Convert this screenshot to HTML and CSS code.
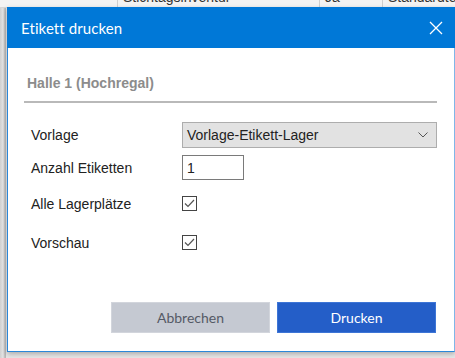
FILE: index.html
```html
<!DOCTYPE html>
<html lang="de">
<head>
<meta charset="utf-8">
<title>Etikett drucken</title>
<link rel="stylesheet" href="styles.css">
</head>
<body>
<div class="backdrop">
  <div class="grid-row">
    <div class="cell c0"></div>
    <div class="cell c1">Stichtagsinventur</div>
    <div class="cell c2">Ja</div>
    <div class="cell c3">Standardtext</div>
  </div>
  <div class="side-strip"></div>
</div>

<div class="dialog">
  <div class="titlebar">
    <span class="title">Etikett drucken</span>
    <svg class="close" width="14" height="14" viewBox="0 0 14 14"><path d="M1 1L13 13M13 1L1 13" stroke="#fff" stroke-width="1.3" fill="none"/></svg>
  </div>
  <div class="content">
    <div class="section-head">Halle 1 (Hochregal)</div>
    <div class="form">
      <div class="row r1">
        <span class="label">Vorlage</span>
        <div class="select">
          <span>Vorlage-Etikett-Lager</span>
          <svg width="10" height="6" viewBox="0 0 10 6"><path d="M0.5 0.5L5 5L9.5 0.5" stroke="#555" stroke-width="1" fill="none"/></svg>
        </div>
      </div>
      <div class="row r2">
        <span class="label">Anzahl Etiketten</span>
        <div class="input">1</div>
      </div>
      <div class="row r3">
        <span class="label">Alle Lagerplätze</span>
        <span class="check"><svg width="13" height="13" viewBox="0 0 13 13"><path d="M2 6.5L5 9.5L11 3" stroke="#555" stroke-width="1.2" fill="none"/></svg></span>
      </div>
      <div class="row r4">
        <span class="label">Vorschau</span>
        <span class="check"><svg width="13" height="13" viewBox="0 0 13 13"><path d="M2 6.5L5 9.5L11 3" stroke="#555" stroke-width="1.2" fill="none"/></svg></span>
      </div>
    </div>
  </div>
  <div class="footer">
    <button class="btn cancel">Abbrechen</button>
    <button class="btn primary">Drucken</button>
  </div>
</div>
</body>
</html>
```

FILE: styles.css
```css
html, body {
  margin: 0;
  padding: 0;
}
body {
  width: 455px;
  height: 358px;
  overflow: hidden;
  position: relative;
  background: #e6e6e6;
  font-family: "Liberation Sans", Arial, sans-serif;
}

.backdrop {
  position: absolute;
  inset: 0;
}
.grid-row {
  display: flex;
  height: 7px;
  overflow: hidden;
  background: #f3f3f3;
  border-bottom: 1px solid #d6d6d6;
}
.cell {
  font-size: 14px;
  line-height: 16px;
  margin-top: -11px;
  color: #333;
  padding-left: 5px;
  border-left: 1px solid #cfcfcf;
  white-space: nowrap;
  overflow: hidden;
}
.c0 { width: 112px; border-left: none; }
.c1 { width: 196px; }
.c2 { width: 57px; }
.c3 { flex: 1; }
.side-strip {
  position: absolute;
  left: 0;
  top: 8px;
  width: 6px;
  bottom: 0;
  background: linear-gradient(90deg, #cfcfcf 0, #e4e4e4 3px, #b8b8b8 5px);
}

.dialog {
  position: absolute;
  left: 7px;
  top: 7px;
  width: 448px;
  height: 345px;
  box-sizing: border-box;
  border: 1px solid #2a87d8;
  border-right-color: #7fb6e8;
  background: #fff;
  display: flex;
  flex-direction: column;
  box-shadow: 0 2px 5px rgba(0,0,0,0.25);
}
.titlebar {
  height: 41px;
  margin: -1px -1px 0 -1px;
  background: #0078d7;
  display: flex;
  align-items: center;
  justify-content: space-between;
  padding: 0 12px 0 14px;
  flex-shrink: 0;
}
.title {
  font-family: Lato, "Noto Sans", sans-serif;
  font-size: 15px;
  color: #fff;
  letter-spacing: 0.1px;
}
.close {
  display: block;
}

.content {
  flex: 1;
  padding: 0 17px 0 16px;
}
.section-head {
  margin-top: 27px;
  padding-left: 3px;
  font-weight: bold;
  font-size: 14px;
  line-height: 16px;
  color: #8c8c8c;
  padding-bottom: 10px;
  border-bottom: 2px solid #b9b9b9;
}
.form {
  padding-left: 7px;
  padding-top: 19px;
  display: flex;
  flex-direction: column;
}
.row {
  display: flex;
  align-items: center;
  font-size: 14px;
  color: #222;
}
.label {
  width: 151px;
  flex-shrink: 0;
}
.r1 { height: 26px; }
.r2 { height: 25px; margin-top: 7px; }
.r3 { height: 25px; margin-top: 11px; }
.r4 { height: 25px; margin-top: 14px; }

.select {
  flex: 1;
  height: 26px;
  box-sizing: border-box;
  border: 1px solid #adadad;
  background: #e2e2e2;
  display: flex;
  align-items: center;
  justify-content: space-between;
  padding: 0 8px 0 4px;
  margin-right: 0;
}
.input {
  width: 62px;
  height: 25px;
  box-sizing: border-box;
  border: 1px solid #7a7a7a;
  padding-left: 4px;
  display: flex;
  align-items: center;
  background: #fff;
}
.check {
  width: 15px;
  height: 15px;
  box-sizing: border-box;
  border: 1px solid #444;
  display: flex;
  align-items: center;
  justify-content: center;
  background: #fff;
}
.check svg { display: block; }

.footer {
  display: flex;
  justify-content: flex-end;
  gap: 7px;
  padding: 0 18px 18px 0;
}
.btn {
  width: 159px;
  height: 31px;
  border: 1px solid transparent;
  font-family: Lato, "Noto Sans", sans-serif;
  font-size: 14px;
  padding: 0;
  cursor: pointer;
}
.cancel {
  background: #c5c9d2;
  color: #555a66;
  border-color: #d2d5dc;
}
.primary {
  background: #245ec8;
  color: #fff;
  border-color: #3d75d6;
}
```
